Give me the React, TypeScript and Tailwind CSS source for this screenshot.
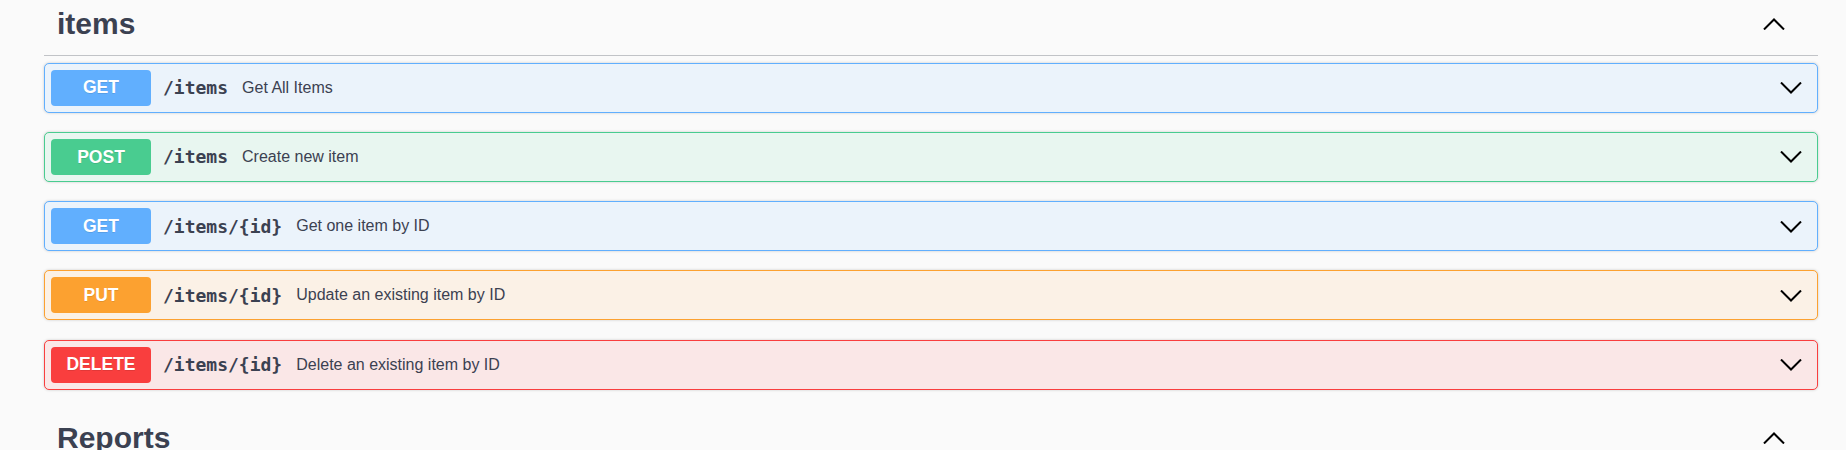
type Op = {
  method: "GET" | "POST" | "PUT" | "DELETE";
  path: string;
  summary: string;
};

const ops: Op[] = [
  { method: "GET", path: "/items", summary: "Get All Items" },
  { method: "POST", path: "/items", summary: "Create new item" },
  { method: "GET", path: "/items/{id}", summary: "Get one item by ID" },
  { method: "PUT", path: "/items/{id}", summary: "Update an existing item by ID" },
  { method: "DELETE", path: "/items/{id}", summary: "Delete an existing item by ID" },
];

const styles: Record<Op["method"], { block: string; badge: string }> = {
  GET: { block: "border-[#61affe] bg-[#ebf3fb]", badge: "bg-[#61affe]" },
  POST: { block: "border-[#49cc90] bg-[#e8f6f0]", badge: "bg-[#49cc90]" },
  PUT: { block: "border-[#fca130] bg-[#fbf1e6]", badge: "bg-[#fca130]" },
  DELETE: { block: "border-[#f93e3e] bg-[#fae7e7]", badge: "bg-[#f93e3e]" },
};

function Chevron({ up }: { up?: boolean }) {
  return (
    <svg width="22" height="12" viewBox="0 0 22 12" fill="none" stroke="#000" strokeWidth="2">
      {up ? <polyline points="1,11.5 11,1.5 21,11.5" /> : <polyline points="1,0.5 11,10.5 21,0.5" />}
    </svg>
  );
}

function TagHeader({ name }: { name: string }) {
  return (
    <div className="flex items-center justify-between border-b border-[#c1c3c7] pt-[7px] pb-[14px] pl-[13px] pr-[33px]">
      <h3 className="text-[30px] font-bold leading-[34px]">{name}</h3>
      <Chevron up />
    </div>
  );
}

function OpBlock({ op }: { op: Op }) {
  const s = styles[op.method];
  return (
    <div className={`flex h-[50px] items-center rounded-[5px] border px-[6px] shadow-[0_0_3px_rgba(0,0,0,0.19)] ${s.block}`}>
      <span
        className={`flex h-[36px] w-[100px] items-center justify-center rounded-[4px] text-[17.5px] font-bold text-white [text-shadow:0_1px_0_rgba(0,0,0,0.1)] ${s.badge}`}
      >
        {op.method}
      </span>
      <span className="pl-[12px] pr-[14px] font-['DejaVu_Sans_Mono',monospace] text-[18px] font-bold">{op.path}</span>
      <span className="flex-1 text-[16px]">{op.summary}</span>
      <span className="mr-[9px] mt-[1px]">
        <Chevron />
      </span>
    </div>
  );
}

export default function App() {
  return (
    <div className="min-h-[450px] overflow-hidden bg-[#fafafa] pl-[44px] pr-[28px] font-['Liberation_Sans',Arial,sans-serif] text-[#3b4151]">
      <section>
        <TagHeader name="items" />
        <div className="mt-[6.5px] flex flex-col gap-[19.25px]">
          {ops.map((op, i) => (
            <OpBlock key={i} op={op} />
          ))}
        </div>
      </section>
      <section className="mt-[24px]">
        <TagHeader name="Reports" />
      </section>
    </div>
  );
}
